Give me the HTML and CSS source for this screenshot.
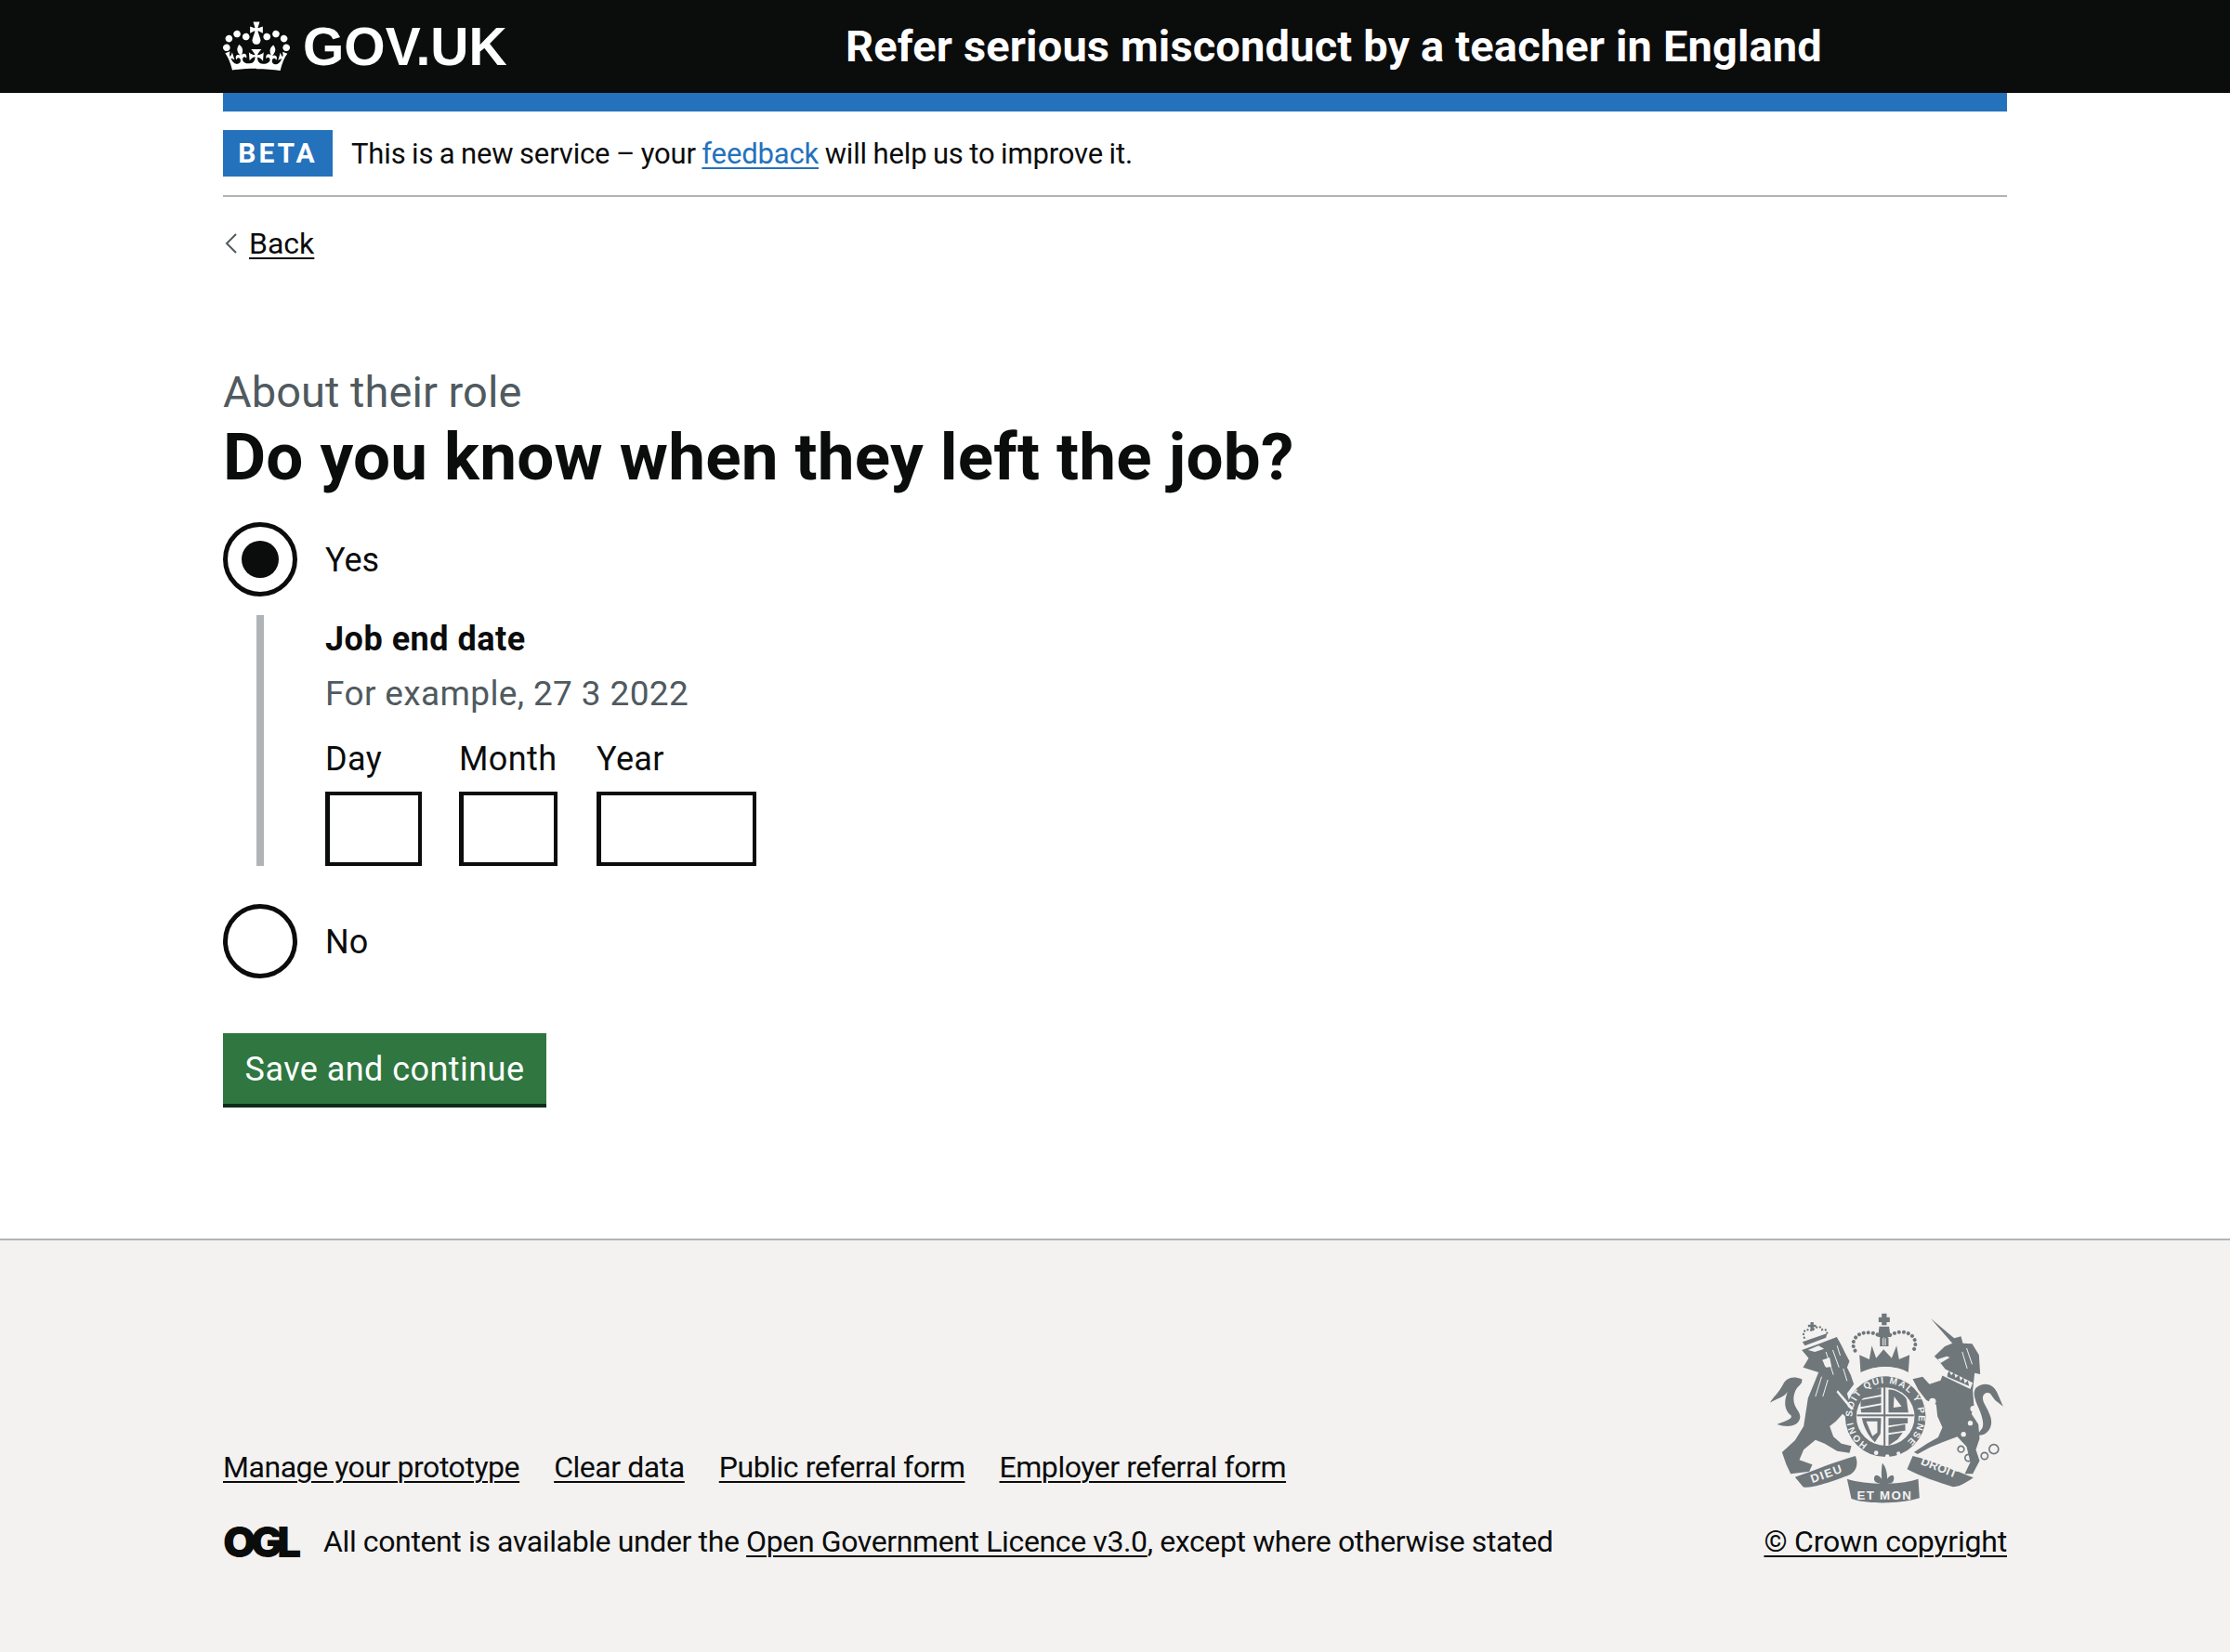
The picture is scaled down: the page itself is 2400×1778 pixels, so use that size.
FILE: index.html
```html
<!DOCTYPE html>
<html lang="en">
<head>
<meta charset="utf-8">
<title>Do you know when they left the job?</title>
<link rel="stylesheet" href="styles.css">
</head>
<body>
<header class="header">
  <div class="container header-inner">
    <a class="logo" href="#">
      <svg class="crown" viewBox="0 0 132 97" aria-hidden="true"><path fill="currentColor" fill-rule="evenodd" d="M25 30.2c3.5 1.5 7.7-.2 9.1-3.7 1.5-3.6-.2-7.8-3.9-9.2-3.6-1.4-7.6.3-9.1 3.9-1.4 3.5.3 7.5 3.9 9zM9 39.5c3.6 1.5 7.8-.2 9.2-3.7 1.5-3.6-.2-7.8-3.9-9.1-3.6-1.5-7.6.2-9.1 3.8-1.4 3.5.3 7.5 3.8 9zM4.4 57.2c3.5 1.5 7.7-.2 9.1-3.8 1.5-3.6-.2-7.7-3.9-9.1-3.5-1.5-7.6.3-9.1 3.8-1.4 3.5.3 7.6 3.9 9.1zm38.3-21.4c3.5 1.5 7.7-.2 9.1-3.8 1.5-3.6-.2-7.7-3.9-9.1-3.6-1.5-7.6.3-9.1 3.8-1.3 3.6.4 7.7 3.9 9.1zm64.4-5.6c-3.6 1.5-7.8-.2-9.1-3.7-1.5-3.6.2-7.8 3.8-9.2 3.6-1.4 7.7.3 9.2 3.9 1.3 3.5-.4 7.5-3.9 9zm15.9 9.3c-3.6 1.5-7.7-.2-9.1-3.7-1.5-3.6.2-7.8 3.7-9.1 3.6-1.5 7.7.2 9.2 3.8 1.5 3.5-.3 7.5-3.8 9zm4.7 17.7c-3.6 1.5-7.8-.2-9.2-3.8-1.5-3.6.2-7.7 3.9-9.1 3.6-1.5 7.7.3 9.2 3.8 1.3 3.5-.4 7.6-3.9 9.1zM89.3 35.8c-3.6 1.5-7.8-.2-9.2-3.8-1.4-3.6.2-7.7 3.9-9.1 3.6-1.5 7.7.3 9.2 3.8 1.4 3.6-.3 7.7-3.9 9.1zM69.7 17.7l8.9 4.7V9.3l-8.9 2.8c-.2-.3-.5-.6-.9-.9L72.4 0H59.6l3.5 11.2c-.3.3-.6.5-.9.9l-8.8-2.8v13.1l8.8-4.7c.3.3.6.7.9.9l-5 15.4v.1c-.2.8-.4 1.6-.4 2.4 0 4.1 3.1 7.5 7 8.1h.2c.3 0 .7.1 1 .1.4 0 .7 0 1-.1h.2c4-.6 7.1-4.1 7.1-8.1 0-.8-.1-1.7-.4-2.4V34l-5.1-15.4c.4-.2.7-.6 1-.9zM66 92.8c16.9 0 32.8 1.1 47.1 3.2 4-16.9 8.9-26.7 14-33.5l-9.6-3.4c1 4.9 1.1 7.2 0 10.2-1.5-1.4-3-4.3-4.2-8.7L108.6 76c2.8-2 5-3.2 7.5-3.3-4.4 9.4-10 11.9-13.6 11.2-4.3-.8-6.3-4.6-5.6-7.9 1-4.7 5.7-5.9 8-.5 4.3-8.7-3-11.4-7.6-8.8 7.1-7.2 7.9-13.5 2.1-21.1-8 6.1-8.1 12.3-4.5 20.8-4.7-5.4-12.1-2.5-9.5 6.2 3.4-5.2 7.9-2 7.2 3.1-.6 4.3-6.4 7.8-13.5 7.2-10.3-.9-10.9-8-11.2-13 2.5-.5 7.1 1.8 11 7.3L80.2 60c-4.1 4.4-8 5.3-12.3 5.4 1.4-4.4 8-11.6 8-11.6H55.5s6.4 7.2 7.9 11.6c-4.2-.1-8-1-12.3-5.4l1.4 16.4c3.9-5.5 8.5-7.7 10.9-7.3-.3 5-.9 12-11.1 13-7.2.6-12.9-2.9-13.5-7.2-.7-5 3.8-8.3 7.1-3.1 2.7-8.7-4.6-11.6-9.4-6.2 3.7-8.5 3.6-14.7-4.6-20.8-5.8 7.6-5 13.9 2.2 21.1-4.7-2.6-11.9.1-7.7 8.8 2.3-5.5 7.1-4.2 8.1.5.7 3.3-1.3 7.1-5.7 7.9-3.5.7-9-1.8-13.5-11.2 2.5.1 4.7 1.3 7.5 3.3l-4.7-15.4c-1.2 4.4-2.7 7.2-4.3 8.7-1.1-3-.9-5.3 0-10.2l-9.5 3.4c5 6.9 9.9 16.7 14 33.5 14.8-2.1 30.8-3.2 47.7-3.2z"/></svg>
      <span class="logo-text">GOV.UK</span>
    </a>
    <a class="service" href="#">Refer serious misconduct by a teacher in England</a>
  </div>
</header>
<div class="container">
  <div class="blue-bar"></div>
  <div class="phase">
    <strong class="tag">BETA</strong>
    <span class="phase-text">This is a new service – your <a class="link-blue" href="#">feedback</a> will help us to improve it.</span>
  </div>
  <a class="back" href="#"><svg class="chev" viewBox="0 0 14 22"><path d="M12 1 2 11l10 10" fill="none" stroke="#505a5f" stroke-width="2"/></svg><span>Back</span></a>
  <main class="main">
    <span class="caption">About their role</span>
    <h1 class="heading">Do you know when they left the job?</h1>
    <div class="radio">
      <span class="radio-mark radio-on"></span>
      <span class="radio-label">Yes</span>
    </div>
    <div class="conditional">
      <div class="field-label">Job end date</div>
      <div class="hint">For example, 27 3 2022</div>
      <div class="date">
        <div class="date-item"><label class="date-label">Day</label><span class="input w2a"></span></div>
        <div class="date-item date-month"><label class="date-label">Month</label><span class="input w2b"></span></div>
        <div class="date-item"><label class="date-label">Year</label><span class="input w4"></span></div>
      </div>
    </div>
    <div class="radio radio-no">
      <span class="radio-mark"></span>
      <span class="radio-label">No</span>
    </div>
    <button class="button" type="button">Save and continue</button>
  </main>
</div>
<footer class="footer">
  <div class="container footer-inner">
    <div class="footer-left">
      <ul class="footer-links">
        <li><a href="#">Manage your prototype</a></li>
        <li><a href="#">Clear data</a></li>
        <li><a href="#">Public referral form</a></li>
        <li><a href="#">Employer referral form</a></li>
      </ul>
      <div class="licence">
        <span class="ogl">OGL</span>
        <span>All content is available under the <a href="#">Open Government Licence v3.0</a>, except where otherwise stated</span>
      </div>
    </div>
    <div class="footer-right">
      <svg class="crest" viewBox="70 70 755 615" aria-hidden="true">
        <g fill="#6f777b">
          <path d="M172 190 228 170 285 148 300 175 312 200 326 226 318 246 330 270 340 300 318 330 334 385 346 412 336 428 304 396 282 420 262 436 274 470 300 492 332 500 326 522 286 516 246 492 216 480 178 512 164 545 206 560 196 582 136 590 122 560 108 520 150 482 178 436 192 345 214 292 226 262 176 246 194 216Z"/>
          <path d="M92 430C120 440 160 440 166 410 172 384 130 372 152 320 160 304 176 300 172 284 140 272 122 282 112 300 96 330 76 345 70 360 92 345 112 345 126 325 116 350 112 380 136 400 146 412 120 418 92 430Z"/>
          <path d="M174 164 254 136 250 150 182 176Z"/>
          <path d="M588 88 664 152 686 146 692 168 722 170 744 206 748 268 730 264 724 320 728 372 720 396 742 430 746 476 734 512 746 548 724 590 698 590 716 552 704 502 674 470 626 488 586 504 546 526 534 520 576 492 612 472 626 440 610 404 606 366 574 352 548 318 530 284 562 276 584 300 620 288 634 250 612 222 600 210 634 178 658 168Z"/>
          <path d="M734 312C760 290 790 300 802 326L822 372 796 352 780 330C762 322 750 340 760 360 772 384 790 410 782 436 776 456 756 470 738 464L752 446C764 430 752 400 744 380 732 352 722 330 734 312Z"/>
          <circle cx="442" cy="405" r="130"/>
          <path d="M358 206 390 220 398 176 412 216 436 188 462 216 478 176 486 220 520 206 516 262 C470 238 410 238 362 262Z"/>
          <path d="M430 72H446V84H456V100H446V110H430V100H420V84H430Z"/>
          <path d="M422 114H454L458 148H418ZM424 150H452V178H424Z"/>
          <path d="M150 600C210 580 280 550 345 532 356 556 350 590 312 598 270 616 190 640 176 632Z"/>
          <path d="M512 575 530 532C590 546 670 580 726 602 700 620 680 632 660 632 610 616 560 600 512 575Z"/>
          <path d="M318 606C380 626 490 626 548 606L552 668C490 688 380 688 332 670Z"/>
          <path d="M432 555C444 566 448 590 448 606 462 586 474 594 468 612 462 624 452 616 446 626L438 636 430 626C424 616 412 624 406 610 402 594 416 586 430 606 428 588 430 566 432 555Z"/>
        </g>
        <g fill="none" stroke="#6f777b">
          <path class="beads" d="M344 192C326 162 350 130 390 134 412 134 424 146 438 150 452 146 466 134 490 132 530 130 550 162 532 192"/>
          <path class="beads-small" d="M180 150C170 128 190 118 206 128 216 112 236 112 238 124 252 120 258 134 250 144"/>
          <circle cx="686" cy="510" r="10" stroke-width="5"/>
          <circle cx="710" cy="538" r="11" stroke-width="5"/>
          <circle cx="762" cy="532" r="11" stroke-width="5"/>
          <circle cx="792" cy="510" r="15" stroke-width="5"/>
        </g>
        <g fill="#6f777b"><path d="M200 100H210V108H218V116H210V128H200V116H192V108H200Z"/></g>
        <g fill="#f3f2f1">
          <path d="M192 190 226 176 244 186 214 196ZM238 222 262 214 268 244 250 246Z"/>
          <circle cx="254" cy="236" r="9"/>
          <circle cx="602" cy="272" r="10"/><circle cx="594" cy="356" r="11"/><circle cx="726" cy="380" r="10"/><circle cx="716" cy="426" r="8"/><circle cx="694" cy="462" r="8"/>
          <path d="M632 250 724 296 716 316 624 272Z"/>
          <path d="M288 320 340 380 332 384 284 326Z"/>
          <path d="M610 220 640 210 650 214 620 232Z"/>
          <path d="M368 262C410 238 470 238 512 262L506 276C470 258 410 258 374 276Z"/>
          <circle cx="442" cy="405" r="94"/>
          <rect x="433" y="152" width="3" height="24"/><rect x="440" y="152" width="3" height="24"/>
          <circle cx="412" cy="522" r="7"/><circle cx="448" cy="534" r="7"/><circle cx="484" cy="524" r="6"/>
        </g>
        <g fill="none" stroke="#f3f2f1" stroke-width="3">
          <path d="M286 176 296 208M272 190 292 246M250 196 274 270M306 250 318 290M236 276 216 340M256 286 240 340"/>
          <path d="M704 184 722 236M690 196 706 250"/>
        </g>
        <g fill="#6f777b">
          <path d="M642 268 648 256 654 272 664 262 668 280 680 270 684 290 694 278 698 298 708 288 712 306 642 276Z"/>
          <rect x="436" y="305" width="6" height="200"/>
          <rect x="350" y="398" width="184" height="6"/>
          <path d="M366 326 428 312V334L368 346ZM362 352 428 340V362L362 374ZM362 380 428 368V392H364Z"/>
          <path d="M452 318C470 316 498 330 510 348L516 392H452ZM470 340 494 372 468 376Z" fill-rule="evenodd"/>
          <path d="M366 410 428 410 426 460 408 488C388 470 372 440 366 410ZM380 420 400 468 416 456 416 420Z" fill-rule="evenodd"/>
          <path d="M452 410H514V426L452 434ZM452 440 506 430V450L452 458ZM452 464 498 456 482 478 452 498Z"/>
        </g>
        <defs>
          <path id="garter" d="M385 495A107 107 0 1 1 499 495"/>
        </defs>
        <g class="crest-text">
          <text font-size="30"><textPath href="#garter" textLength="535">HONI SOIT QUI MAL Y PENSE</textPath></text>
          <text font-size="38" transform="translate(206 620) rotate(-20)" textLength="104">DIEU</text>
          <text font-size="38" transform="translate(554 558) rotate(22)" textLength="122">DROIT</text>
          <text font-size="40" x="350" y="672" textLength="175">ET MON</text>
        </g>
      </svg>
      <a class="copyright" href="#">© Crown copyright</a>
    </div>
  </div>
</footer>
</body>
</html>
```
FILE: styles.css
```css
* { box-sizing: border-box; }
html, body { margin: 0; padding: 0; }
body {
  font-family: Roboto, "Noto Sans", sans-serif;
  color: #0b0c0c;
  background: #fff;
  font-size: 36px;
}
a { color: inherit; text-underline-offset: 4px; text-decoration-thickness: 2px; }
.container { width: 1920px; margin: 0 auto; }

.header { background: #0b0c0c; color: #fff; height: 100px; }
.header-inner { display: flex; align-items: center; height: 100px; }
.logo { display: flex; align-items: center; gap: 14px; width: 670px; color: #fff; text-decoration: none; }
.crown { width: 72px; height: 54px; display: block; }
.logo-text { font-family: "Liberation Sans", Arial, sans-serif; font-weight: 700; font-size: 57px; line-height: 100px; }
.service { color: #fff; text-decoration: none; font-weight: 700; font-size: 47px; line-height: 100px; letter-spacing: .15px; }

.blue-bar { height: 20px; background: #2472bb; }
.phase { display: flex; align-items: center; gap: 20px; height: 92px; border-bottom: 2px solid #b1b4b6; }
.tag { background: #2472bb; color: #fff; font-size: 30px; line-height: 50px; height: 50px; width: 118px; text-align: center; letter-spacing: 3px; }
.phase-text { font-size: 31px; letter-spacing: -.15px; word-spacing: -1px; }
.link-blue { color: #2472bb; }

.back { display: flex; align-items: center; height: 60px; margin: 20px 0 0 2px; font-size: 32px; gap: 12px; }
.chev { width: 14px; height: 22px; flex: none; }

.main { padding: 100px 0 141px; }
.caption { display: block; color: #505a5f; font-size: 47px; line-height: 60px; letter-spacing: .05px; }
.heading { margin: 0 0 30px; font-size: 71px; line-height: 80px; font-weight: 700; letter-spacing: .22px; }

.radio { display: flex; align-items: center; gap: 30px; height: 80px; }
.radio-no { margin-top: 41px; }
.radio-mark { position: relative; width: 80px; height: 80px; border: 5px solid #0b0c0c; border-radius: 50%; flex: none; }
.radio-on::after { content: ""; position: absolute; top: 15px; left: 15px; width: 40px; height: 40px; border-radius: 50%; background: #0b0c0c; }
.radio-label { font-size: 36px; padding-top: 2px; }

.conditional { margin: 20px 0 0 36px; height: 270px; border-left: 8px solid #b1b4b6; padding-left: 66px; }
.field-label { font-weight: 700; font-size: 36px; line-height: 52px; letter-spacing: .5px; }
.hint { color: #505a5f; font-size: 37px; line-height: 50px; margin-top: 8px; letter-spacing: .36px; }
.date { display: flex; gap: 40px; margin-top: 20px; }
.date-item { display: flex; flex-direction: column; gap: 10px; }
.date-month { width: 108px; }
.date-label { font-size: 36px; line-height: 50px; letter-spacing: .4px; }
.input { display: block; height: 80px; border: 4px solid #0b0c0c; border-left-width: 5px; background: #fff; }
.w2a { width: 104px; }
.w2b { width: 106px; }
.w4 { width: 172px; }

.button { display: block; margin-top: 59px; width: 348px; height: 80px; padding: 2px 0 0; border: 0; background: #2f7640; border-bottom: 4px solid #0f2c1a; color: #fff; font-family: inherit; font-size: 36px; letter-spacing: .45px; }

.footer { background: #f3f2f1; border-top: 2px solid #b1b4b6; height: 445px; padding-top: 78px; }
.footer-inner { display: flex; justify-content: space-between; align-items: flex-end; font-size: 32px; }
.footer-left { display: flex; flex-direction: column; gap: 30px; }
.footer-links { display: flex; gap: 37px; list-style: none; margin: 0; padding: 0; line-height: 50px; letter-spacing: -.45px; }
.licence { display: flex; align-items: center; gap: 26px; line-height: 50px; letter-spacing: -.38px; }
.ogl { font-family: Inter, "Liberation Sans", sans-serif; font-weight: 900; font-size: 46px; line-height: 50px; letter-spacing: -6px; width: 82px; }
.footer-right { display: flex; flex-direction: column; align-items: flex-end; gap: 16px; }
.crest { display: block; width: 252px; height: 205px; margin-right: 3px; }
.beads { stroke-width: 12; stroke-dasharray: .1 15; stroke-linecap: round; }
.beads-small { stroke-width: 7; stroke-dasharray: .1 11; stroke-linecap: round; }
.crest-text { fill: #f3f2f1; font-family: "Liberation Sans", sans-serif; font-weight: 700; }
.copyright { line-height: 50px; letter-spacing: -.2px; }
```
